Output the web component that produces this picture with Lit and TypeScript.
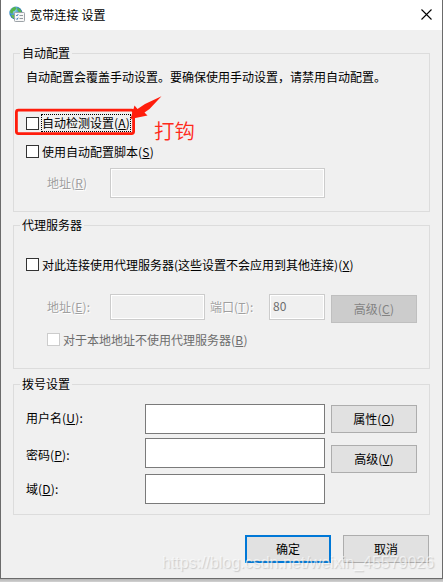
import { LitElement, html, css, nothing } from "lit";
import { customElement, property } from "lit/decorators.js";
import { classMap } from "lit/directives/class-map.js";

@customElement("key-label")
class KeyLabel extends LitElement {
  static properties = { text: {}, hotkey: {}, tail: {} };
  declare text: string;
  declare hotkey: string;
  declare tail: string;
  static styles = css`
    :host { display: inline-block; white-space: nowrap; }
    .latin { letter-spacing: .2px; }
    .key { text-decoration: underline; text-decoration-thickness: 1px; text-underline-offset: 1px; text-decoration-skip-ink: none; }
  `;
  render() {
    return html`${this.text}${this.hotkey
      ? html`<span class="latin">(<span class="key">${this.hotkey}</span>)${this.tail ?? ""}</span>`
      : nothing}`;
  }
}

@customElement("check-row")
class CheckRow extends LitElement {
  @property() text = "";
  @property() hotkey = "";
  @property({ type: Boolean }) disabled = false;
  @property({ type: Boolean }) focused = false;
  static styles = css`
    :host { display: flex; align-items: center; height: 27px; }
    .box { box-sizing: border-box; width: 13px; height: 13px; border: 1px solid #333; background: #fff; flex: none; }
    .box.off { border-color: #ccc; }
    .label { display: flex; align-items: center; box-sizing: border-box; height: 18px; margin-left: 2px; border: 1px solid transparent; }
    .label.off { color: #6d6d6d; }
    .label.focus { border: 1px dotted #000; margin-top: -1px; }
  `;
  render() {
    return html`<span class=${classMap({ box: true, off: this.disabled })}></span>
      <span class=${classMap({ label: true, off: this.disabled, focus: this.focused })}
        ><key-label .text=${this.text} .hotkey=${this.hotkey}></key-label></span>`;
  }
}

@customElement("push-button")
class PushButton extends LitElement {
  @property() text = "";
  @property() hotkey = "";
  @property({ reflect: true }) kind = "normal";
  static styles = css`
    :host { box-sizing: border-box; display: flex; align-items: center; justify-content: center; width: 86px; height: 28px; background: #e1e1e1; border: 1px solid #adadad; }
    :host([kind="default"]) { border: 2px solid #0078d7; }
    :host([kind="disabled"]) { background: #ccc; border-color: #bfbfbf; color: #838383; }
  `;
  render() {
    return html`<key-label .text=${this.text} .hotkey=${this.hotkey}></key-label>`;
  }
}

@customElement("app-root")
class AppRoot extends LitElement {
  static styles = css`
    :host { display: block; position: relative; width: 443px; height: 582px; overflow: hidden; background: linear-gradient(#b4b4b4 579px, #d2d2d2 582px); font: 12px/16px "Noto Sans CJK SC", sans-serif; color: #000; }
    .window { box-sizing: border-box; width: 443px; height: 579px; border: 1px solid #6b6b6b; border-top: 0; background: #f0f0f0; display: flex; flex-direction: column; }
    .titlebar { height: 30px; flex: none; background: #fff; display: flex; align-items: center; padding: 0 10px 0 8px; }
    .appicon { width: 17px; height: 17px; flex: none; margin-top: -2px; }
    .title { margin: -1px auto 0 4px; letter-spacing: .15px; }
    .close { width: 11px; height: 11px; margin-top: -2px; }
    .group { box-sizing: border-box; width: 417px; margin-left: 12px; border: 1px solid #dcdcdc; flex: none; }
    .auto { height: 159px; margin-top: 23px; }
    .proxy { height: 144px; margin-top: 13px; }
    .dial { height: 131px; margin-top: 15px; }
    .legend { width: max-content; height: 16px; margin: -9px 0 0 6px; padding: 0 2px; background: #f0f0f0; }
    .desc { height: 32px; line-height: 31px; padding-left: 12px; white-space: nowrap; }
    .check { margin-left: 12px; }
    .first { margin-top: 17px; }
    .second { margin-top: 1px; }
    .proxycheck { margin-top: 18px; }
    .sub { margin: 3px 0 0 33px; }
    .row { display: flex; align-items: flex-start; padding-left: 33px; }
    .script { margin-top: 3px; align-items: center; }
    .server { margin-top: 16px; height: 29px; }
    .field { box-sizing: border-box; height: 30px; border: 1px solid #7a7a7a; background: #fff; }
    .field.off { border-color: #ccc; background: #f0f0f0; box-shadow: inset 0 0 0 1px #fff; color: #6d6d6d; }
    .field.short { height: 26px; padding: 3px 0 0 3px; }
    .etched { color: #a0a0a0; text-shadow: 1px 1px #fff; }
    .script .etched { width: 63px; }
    .server .etched { padding-top: 5px; }
    .addr { width: 63px; }
    .w215 { width: 215px; }
    .w95 { width: 95px; }
    .w56 { width: 56px; }
    .port { width: 59px; margin-left: 5px; }
    .server push-button { margin: 1px 0 0 6px; }
    .account { display: grid; grid-template-columns: 113px 180px 86px; column-gap: 6px; padding: 12px 0 0 12px; }
    .labels { display: flex; flex-direction: column; padding-top: 6px; }
    .labels .pwd { margin-top: 21px; }
    .labels .dom { margin-top: 18px; }
    .inputs { display: flex; flex-direction: column; gap: 4px; }
    .inputs .last { margin-top: 2px; }
    .buttons { display: flex; flex-direction: column; gap: 12px; padding-top: 1px; }
    .footer { display: flex; justify-content: flex-end; gap: 12px; margin: 20px 13px 0 0; }
    .callout { position: absolute; left: 0; top: 90px; width: 170px; height: 50px; }
    .note { position: absolute; left: 154px; top: 117px; font-size: 20.5px; line-height: 26px; color: #ff2a1a; font-weight: 350; }
    .mark { position: absolute; left: 162px; top: 553px; font: 16px/20px "Liberation Sans", sans-serif; color: rgba(255,255,255,.6); text-shadow: 1px 1px 1px rgba(120,120,120,.3); white-space: nowrap; }
  `;
  render() {
    return html`
      <div class="window">
        <header class="titlebar">
          <svg class="appicon" viewBox="0 0 17 17">
            <defs>
              <radialGradient id="globe" cx=".35" cy=".3" r=".8">
                <stop offset="0" stop-color="#a9dcf2" />
                <stop offset=".5" stop-color="#3a8fc8" />
                <stop offset="1" stop-color="#1c5292" />
              </radialGradient>
            </defs>
            <circle cx="6.8" cy="7" r="6.5" fill="url(#globe)" />
            <path d="M1.2 4.5Q3 1.2 6 .8L7.5 2.5 5.5 5 4 5.5 3.5 8 1.2 6.5ZM8.5 1.5Q12 3 12.8 6L10 6 8.3 4Z" fill="#55b448" />
            <path d="M2 9L5 9 5.5 12.5 3.8 12Z" fill="#67bf4d" />
            <rect x="5.5" y="6.5" width="10" height="9" rx=".8" fill="#f7f7f7" stroke="#9da3a8" />
            <path d="M7.2 9L8 9.9 9.2 8.1M7.2 12.6L8 13.5 9.2 11.7" fill="none" stroke="#3977bd" />
            <path d="M10.5 9.5H14M10.5 12.5H14" stroke="#92999e" />
          </svg>
          <span class="title">宽带连接 设置</span>
          <svg class="close" viewBox="0 0 11 11"><path d="M.5.5L10.5 10.5M10.5.5L.5 10.5" stroke="#000" stroke-width="1.1" /></svg>
        </header>

        <section class="group auto">
          <div class="legend">自动配置</div>
          <div class="desc">自动配置会覆盖手动设置。要确保使用手动设置，请禁用自动配置。</div>
          <check-row class="check first" text="自动检测设置" hotkey="A" focused></check-row>
          <check-row class="check second" text="使用自动配置脚本" hotkey="S"></check-row>
          <div class="row script">
            <key-label class="etched" text="地址" hotkey="R"></key-label>
            <div class="field off w215"></div>
          </div>
        </section>

        <section class="group proxy">
          <div class="legend">代理服务器</div>
          <check-row class="check proxycheck" text="对此连接使用代理服务器(这些设置不会应用到其他连接)" hotkey="X"></check-row>
          <div class="row server">
            <key-label class="etched addr" text="地址" hotkey="E" tail=":"></key-label>
            <div class="field off short w95"></div>
            <key-label class="etched port" text="端口" hotkey="T" tail=":"></key-label>
            <div class="field off short w56">80</div>
            <push-button kind="disabled" text="高级" hotkey="C"></push-button>
          </div>
          <check-row class="sub" text="对于本地地址不使用代理服务器" hotkey="B" disabled></check-row>
        </section>

        <section class="group dial">
          <div class="legend">拨号设置</div>
          <div class="account">
            <div class="labels">
              <key-label text="用户名" hotkey="U" tail=":"></key-label>
              <key-label class="pwd" text="密码" hotkey="P" tail=":"></key-label>
              <key-label class="dom" text="域" hotkey="D" tail=":"></key-label>
            </div>
            <div class="inputs">
              <div class="field"></div>
              <div class="field"></div>
              <div class="field last"></div>
            </div>
            <div class="buttons">
              <push-button text="属性" hotkey="O"></push-button>
              <push-button text="高级" hotkey="V"></push-button>
            </div>
          </div>
        </section>

        <footer class="footer">
          <push-button kind="default" text="确定"></push-button>
          <push-button text="取消"></push-button>
        </footer>
      </div>
      <svg class="callout" viewBox="0 0 170 50">
        <rect x="16.4" y="20.2" width="117.2" height="23.4" rx="2" fill="none" stroke="#ff1d0c" stroke-width="2.8" />
        <path d="M161.5 6.2L149.5 19 144.5 22.5 147.5 25.5 130.5 29 134.5 15.5 137.5 19 145 14Z" fill="#ff1d0c" />
      </svg>
      <div class="note">打钩</div>
      <div class="mark">https://blog.csdn.net/weixin_45579026</div>
    `;
  }
}
